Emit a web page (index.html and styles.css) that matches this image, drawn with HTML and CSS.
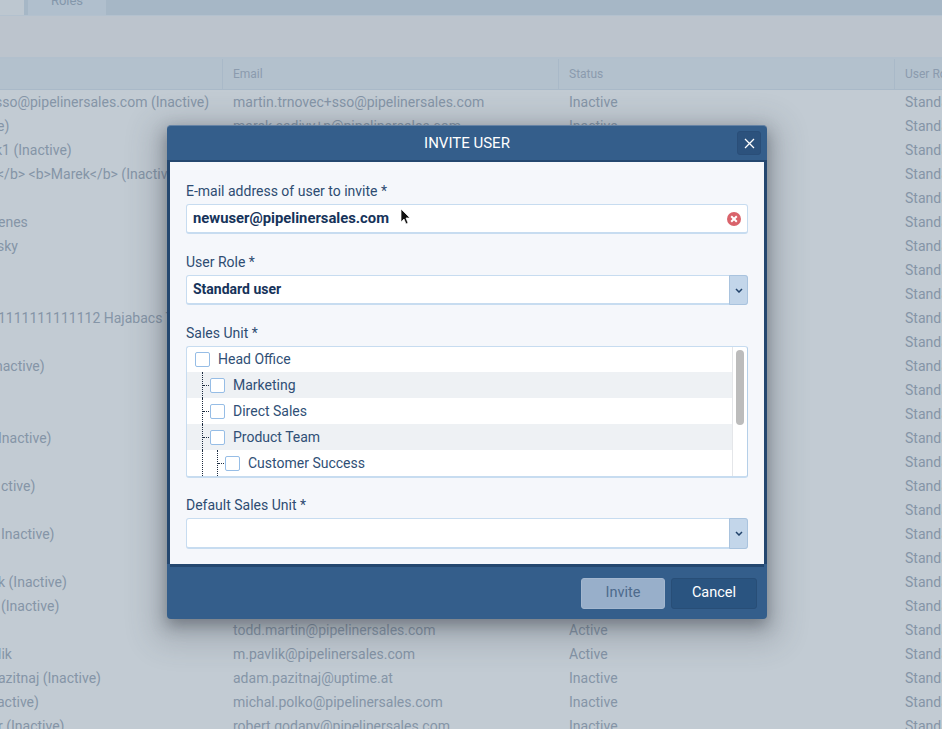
FILE: index.html
```html
<!DOCTYPE html>
<html>
<head>
<meta charset="utf-8">
<title>Invite user</title>
<link rel="stylesheet" href="styles.css">
</head>
<body>
<div class="page">
  <div class="tabs"><div class="tab active"></div><div class="tab">Roles</div></div>
  <div class="toolbar"></div>
  <div class="table">
    <div class="row head"><div class="c1"></div><div class="c2">Email</div><div class="c3">Status</div><div class="c4">User Role</div></div>
    <div class="row"><div class="c1"><span class="far">sso@pipelinersales.com (Inactive)</span></div><div class="c2">martin.trnovec+sso@pipelinersales.com</div><div class="c3">Inactive</div><div class="c4">Standard</div></div>
    <div class="row"><div class="c1"><span>e)</span></div><div class="c2">marek.sadivy+n@pipelinersales.com</div><div class="c3">Inactive</div><div class="c4">Standard</div></div>
    <div class="row"><div class="c1"><span class="far">k1 (Inactive)</span></div><div class="c2"></div><div class="c3"></div><div class="c4">Standard</div></div>
    <div class="row"><div class="c1"><span>&lt;/b&gt; &lt;b&gt;Marek&lt;/b&gt; (Inactive)</span></div><div class="c2"></div><div class="c3"></div><div class="c4">Standard</div></div>
    <div class="row"><div class="c1"></div><div class="c2"></div><div class="c3"></div><div class="c4">Standard</div></div>
    <div class="row"><div class="c1"><span class="near">enes</span></div><div class="c2"></div><div class="c3"></div><div class="c4">Standard</div></div>
    <div class="row"><div class="c1"><span>sky</span></div><div class="c2"></div><div class="c3"></div><div class="c4">Standard</div></div>
    <div class="row"><div class="c1"></div><div class="c2"></div><div class="c3"></div><div class="c4">Standard</div></div>
    <div class="row"><div class="c1"></div><div class="c2"></div><div class="c3"></div><div class="c4">Standard</div></div>
    <div class="row"><div class="c1"><span class="near">1111111111112 Hajabacs Tibor</span></div><div class="c2"></div><div class="c3"></div><div class="c4">Standard</div></div>
    <div class="row"><div class="c1"></div><div class="c2"></div><div class="c3"></div><div class="c4">Standard</div></div>
    <div class="row"><div class="c1"><span class="far">nactive)</span></div><div class="c2"></div><div class="c3"></div><div class="c4">Standard</div></div>
    <div class="row"><div class="c1"></div><div class="c2"></div><div class="c3"></div><div class="c4">Standard</div></div>
    <div class="row"><div class="c1"></div><div class="c2"></div><div class="c3"></div><div class="c4">Standard</div></div>
    <div class="row"><div class="c1"><span class="near">Inactive)</span></div><div class="c2"></div><div class="c3"></div><div class="c4">Standard</div></div>
    <div class="row"><div class="c1"></div><div class="c2"></div><div class="c3"></div><div class="c4">Standard</div></div>
    <div class="row"><div class="c1"><span class="flush">ctive)</span></div><div class="c2"></div><div class="c3"></div><div class="c4">Standard</div></div>
    <div class="row"><div class="c1"></div><div class="c2"></div><div class="c3"></div><div class="c4">Standard</div></div>
    <div class="row"><div class="c1"><span class="flush">Inactive)</span></div><div class="c2"></div><div class="c3"></div><div class="c4">Standard</div></div>
    <div class="row"><div class="c1"></div><div class="c2"></div><div class="c3"></div><div class="c4">Standard</div></div>
    <div class="row"><div class="c1"><span class="near">k (Inactive)</span></div><div class="c2"></div><div class="c3"></div><div class="c4">Standard</div></div>
    <div class="row"><div class="c1"><span class="flush">(Inactive)</span></div><div class="c2"></div><div class="c3"></div><div class="c4">Standard</div></div>
    <div class="row"><div class="c1"></div><div class="c2">todd.martin@pipelinersales.com</div><div class="c3">Active</div><div class="c4">Standard</div></div>
    <div class="row"><div class="c1"><span class="near">lik</span></div><div class="c2">m.pavlik@pipelinersales.com</div><div class="c3">Active</div><div class="c4">Standard</div></div>
    <div class="row"><div class="c1"><span class="near">azitnaj (Inactive)</span></div><div class="c2">adam.pazitnaj@uptime.at</div><div class="c3">Inactive</div><div class="c4">Standard</div></div>
    <div class="row"><div class="c1"><span>active)</span></div><div class="c2">michal.polko@pipelinersales.com</div><div class="c3">Inactive</div><div class="c4">Standard</div></div>
    <div class="row"><div class="c1"><span class="near">r (Inactive)</span></div><div class="c2">robert.godany@pipelinersales.com</div><div class="c3">Inactive</div><div class="c4">Standard</div></div>
  </div>
</div>

<div class="modal">
  <div class="modal-title">
    <span>INVITE USER</span>
    <button class="close" aria-label="Close">
      <svg width="11" height="11" viewBox="0 0 11 11"><path d="M1 1l9 9M10 1l-9 9" stroke="#fff" stroke-width="1.3" fill="none"/></svg>
    </button>
  </div>
  <div class="modal-body">
    <label class="lbl">E-mail address of user to invite *</label>
    <div class="field email">
      <span>newuser@pipelinersales.com</span>
      <svg class="clear" width="14" height="14" viewBox="0 0 14 14"><circle cx="7" cy="7" r="7" fill="#d9636b"/><path d="M4.2 4.2l5.6 5.6M9.8 4.2l-5.6 5.6" stroke="#fff" stroke-width="2" fill="none"/></svg>
    </div>
    <label class="lbl">User Role *</label>
    <div class="field select">
      <span>Standard user</span>
      <div class="arrow"><svg width="8" height="5" viewBox="0 0 8 5"><path d="M1 1l3 3 3-3" stroke="#22436b" stroke-width="1.5" fill="none"/></svg></div>
    </div>
    <label class="lbl">Sales Unit *</label>
    <div class="tree">
      <div class="tree-list">
        <div class="node first"><i class="check"></i>Head Office</div>
        <div class="node alt lvl1"><i class="guide g1"></i><i class="tick t1"></i><i class="check"></i>Marketing</div>
        <div class="node lvl1"><i class="guide g1"></i><i class="tick t1"></i><i class="check"></i>Direct Sales</div>
        <div class="node alt lvl1"><i class="guide g1"></i><i class="tick t1"></i><i class="check"></i>Product Team</div>
        <div class="node lvl2"><i class="guide g1"></i><i class="guide g2"></i><i class="tick t2"></i><i class="check"></i>Customer Success</div>
      </div>
      <div class="scroll"><div class="thumb"></div></div>
    </div>
    <label class="lbl">Default Sales Unit *</label>
    <div class="field select tall">
      <span></span>
      <div class="arrow"><svg width="8" height="5" viewBox="0 0 8 5"><path d="M1 1l3 3 3-3" stroke="#22436b" stroke-width="1.5" fill="none"/></svg></div>
    </div>
  </div>
  <div class="modal-foot">
    <button class="btn invite">Invite</button>
    <button class="btn cancel">Cancel</button>
  </div>
</div>

<svg class="cursor" width="12" height="18" viewBox="0 0 12 18"><path d="M1 1v13l3-3 2 5 2-1-2-5h4z" fill="#111" stroke="#fff" stroke-width=".7"/></svg>
</body>
</html>
```

FILE: styles.css
```css
* { box-sizing: border-box; }
html, body { margin: 0; height: 100%; overflow: hidden; }
body { font-family: Roboto, "Liberation Sans", sans-serif; background: #c2cbd3; color: #8595a7; width: 942px; height: 729px; position: relative; }
.page { height: 729px; overflow: hidden; }
.tabs { height: 16px; background: #a6b7c6; display: flex; border-bottom: 1px solid #b3c1ce; }
.tab { height: 15px; font-size: 13px; line-height: 1px; color: #8497ab; text-align: center; background: #b0bfcd; width: 78px; margin-left: 4px; }
.tab.active { width: 24px; margin: 0; background: #bdc7d0; }
.toolbar { height: 43px; background: #bcc4cd; border-bottom: 2px solid #b2c0cd; }
.table { font-size: 14px; }
.row { display: flex; height: 24px; line-height: 24px; white-space: nowrap; }
.row.head { height: 31px; line-height: 30px; font-size: 12px; background: #b3c1cd; border-bottom: 1px solid #a9b9c8; color: #8b9bae; }
.row.head .c2, .row.head .c3, .row.head .c4 { border-left: 1px solid #a9b9c8; padding-left: 10px; }
.c1 { width: 222px; overflow: hidden; }
.c1 span { display: block; margin-left: -3px; }
.c1 span.far { margin-left: -5px; }
.c1 span.near { margin-left: -2px; }
.c1 span.flush { margin-left: 1px; }
.c2 { width: 336px; padding-left: 11px; }
.c3 { width: 336px; padding-left: 11px; }
.c4 { width: 48px; padding-left: 11px; overflow: hidden; }
.modal { position: absolute; left: 167px; top: 125px; width: 600px; height: 494px; background: #345e8b; border-radius: 4px; box-shadow: 0 6px 16px rgba(40, 45, 55, .42), 0 10px 30px 14px rgba(60, 65, 75, .2); display: flex; flex-direction: column; border-top: 1px solid #6583a5; }
.modal-title { height: 34px; flex: none; display: flex; align-items: center; justify-content: center; color: #fff; font-size: 15px; position: relative; }
.close { position: absolute; right: 6px; top: 5px; width: 24px; height: 24px; background: #2c527d; border: 1px solid #2a4e78; border-radius: 3px; padding: 0; display: flex; align-items: center; justify-content: center; }
.modal-body { height: 404px; flex: none; margin: 0 3px; background: #f5f7fb; padding: 21px 16px 0; border-top: 2px solid #24476f; box-shadow: 3px 0 0 #24476f, -3px 0 0 #24476f, 0 3px 0 #24476f; }
.lbl { display: block; font-size: 14px; line-height: 16px; color: #2e4c72; margin-bottom: 5px; height: 16px; }
.field { height: 30px; background: #fff; border: 1px solid #c7dcf0; border-bottom-width: 2px; border-radius: 3px; display: flex; align-items: center; font-size: 14px; color: #16335a; font-weight: 700; padding-left: 6px; position: relative; }
.field > span { padding-bottom: 2px; }
.field.email { margin-bottom: 20px; font-size: 14.8px; justify-content: space-between; padding-right: 6px; }
.field.select { margin-bottom: 20px; justify-content: space-between; padding-right: 0; }
.field.select.tall { height: 31px; margin-bottom: 0; }
.arrow { width: 19px; height: 30px; margin: -1px -1px -2px 0; background: #c3d6ea; border: 1px solid #a9c3de; border-radius: 0 3px 3px 0; display: flex; align-items: center; justify-content: center; }
.tall .arrow { height: 31px; }
.tree { height: 132px; background: #fff; border: 1px solid #c7dcf0; border-bottom-width: 2px; border-right-color: #b5cfe8; border-radius: 3px; display: flex; margin-bottom: 19px; overflow: hidden; }
.tree-list { flex: 1; }
.node { height: 26px; display: flex; align-items: center; font-size: 14px; font-weight: 400; color: #304f76; padding-left: 8px; position: relative; }
.node.first { height: 25px; padding-bottom: 1px; }
.node.lvl1 { padding-left: 23px; }
.node.lvl2 { padding-left: 38px; }
.node.alt { background: #eef1f4; }
.check { width: 15px; height: 15px; background: #fff; border: 1px solid #96bde6; border-radius: 2px; margin-right: 8px; flex: none; }
.guide { position: absolute; top: 0; bottom: 0; width: 0; border-left: 1px dotted #1d2c40; }
.g1 { left: 15px; }
.g2 { left: 30px; }
.tick { position: absolute; top: 13px; height: 0; width: 6px; border-top: 1px dotted #1d2c40; }
.t1 { left: 16px; }
.t2 { left: 31px; }
.scroll { width: 15px; flex: none; border-left: 1px solid #e4e6e9; padding: 3px 3px 0; }
.thumb { width: 8px; height: 75px; background: #bcbcbc; border-radius: 4px; }
.modal-foot { flex: 1; display: flex; justify-content: flex-end; align-items: flex-start; gap: 6px; padding: 14px 10px 0 0; }
.btn { width: 84px; height: 31px; border-radius: 3px; font-family: inherit; font-size: 14.5px; padding: 0 0 2px; }
.invite { background: #98afca; border: 1px solid #a3b7cf; color: #4d6a8c; }
.cancel { width: 86px; background: #2a5480; border: 1px solid #284e77; color: #fff; }
.cursor { position: absolute; left: 400px; top: 208px; }
```
